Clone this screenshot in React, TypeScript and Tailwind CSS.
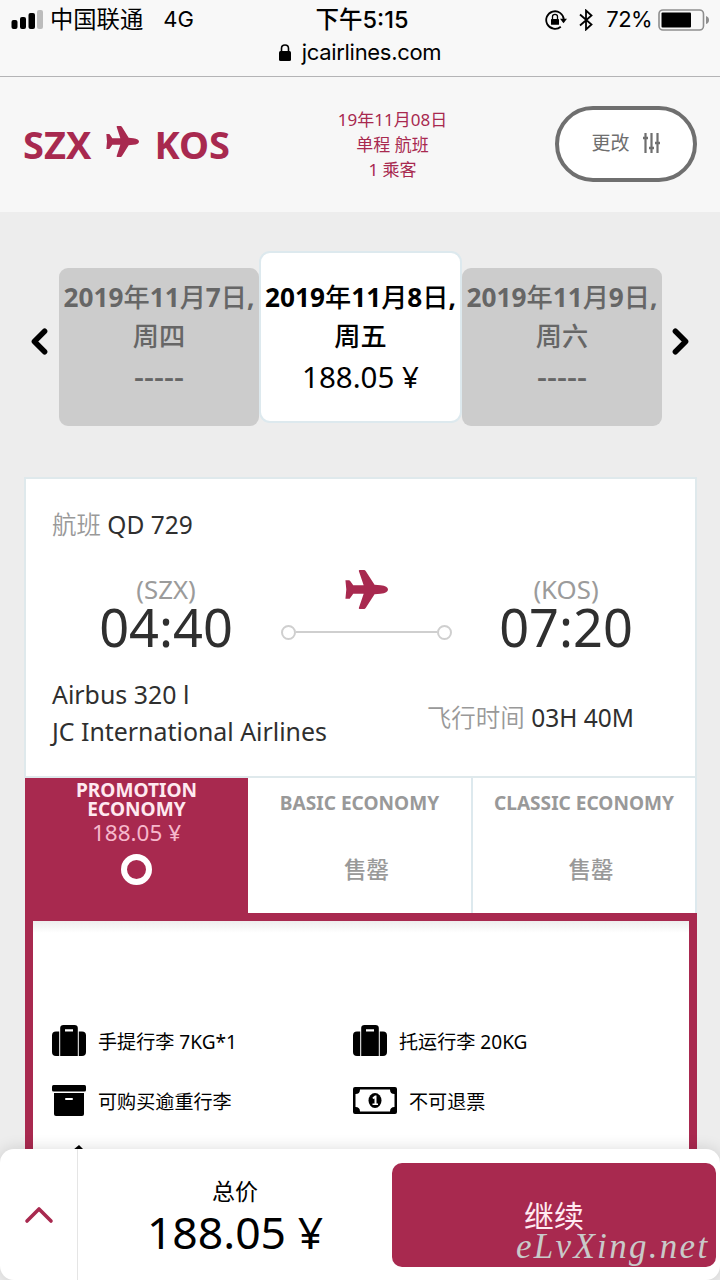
import type { ReactNode } from 'react';
import { ChevronLeft, ChevronRight, ChevronUp } from 'lucide-react';

const days = [
  { id: 'thu', date: ['2019', '年', '11', '月', '7', '日', ','], weekday: '周四', price: '-----', active: false },
  { id: 'fri', date: ['2019', '年', '11', '月', '8', '日', ','], weekday: '周五', price: '188.05 ¥', active: true },
  { id: 'sat', date: ['2019', '年', '11', '月', '9', '日', ','], weekday: '周六', price: '-----', active: false },
];

const soldOutFares = [
  { id: 'basic', name: 'BASIC ECONOMY', width: 'w-[225px]' },
  { id: 'classic', name: 'CLASSIC ECONOMY', width: 'w-[224px]' },
];

function Plane({ className }: { className: string }) {
  return (
    <svg viewBox="0 0 99 92" preserveAspectRatio="none" className={className} fill="currentColor">
      <path d="M1 24H9Q11 24 12 26L19 36H43L32 3Q31 0 34 0H44Q46 0 48 3L68 35L82 36Q99 38 99 46Q99 54 82 56L68 57L48 89Q46 92 44 92H34Q31 92 32 89L43 56H19L12 66Q11 68 9 68H1L3 46Z" />
    </svg>
  );
}

function Suitcase() {
  return (
    <svg viewBox="0 0 34 31" className="h-[31px] w-[34px] shrink-0">
      <path d="M7.200 6.500V31H4a4 4 0 0 1-4-4V10.500a4 4 0 0 1 4-4zM26.800 6.500V31H30a4 4 0 0 0 4-4V10.500a4 4 0 0 0-4-4z" />
      <path fillRule="evenodd" d="M8.200 31V3Q8.200 0 11.500 0h11q3.300 0 3.300 3v28zM13 4.300v2.200h8V4.300z" />
    </svg>
  );
}

function Archive() {
  return (
    <svg viewBox="0 0 34 31" className="h-[31px] w-[34px] shrink-0">
      <rect width="34" height="6.500" rx="1.500" />
      <path d="M2 8H32V29q0 2-2 2H4q-2 0-2-2z" />
      <rect x="13" y="13" width="8" height="2" rx="1" fill="#fff" />
    </svg>
  );
}

function Money() {
  return (
    <svg viewBox="0 0 44 27" className="h-[27px] w-[44px] shrink-0">
      <path fillRule="evenodd" d="M2 0h40q2 0 2 2v23q0 2-2 2H2q-2 0-2-2V2q0-2 2-2zM7 2.500q0 4.500-4.500 4.500v13q4.500 0 4.500 4.500h30q0-4.500 4.500-4.500V7q-4.500 0-4.500-4.500z" />
      <ellipse cx="22" cy="13.500" rx="6.500" ry="7.500" />
      <path d="M19.500 10.500L22 8.500H23.500V16.500H25V18H19.500V16.500H21.500V11.500L20 12Z" fill="#fff" />
    </svg>
  );
}

function StatusBar() {
  return (
    <div className="h-[77px] shrink-0 border-b border-[#b4b4b6] bg-[#f8f8f8] font-['Inter','Noto_Sans_CJK_SC',sans-serif] text-black">
      <div className="grid h-[39px] grid-cols-[1fr_auto_1fr] items-center pl-[11px] pr-[11px]">
        <div className="flex items-center">
          <svg viewBox="0 0 32 19" className="h-[19px] w-8">
            <rect x="0.500" y="10" width="6" height="9" rx="2" />
            <rect x="9" y="7" width="6" height="12" rx="2" />
            <rect x="17.500" y="3" width="6.500" height="16" rx="2" />
            <rect x="26" y="0" width="6" height="19" rx="2" fill="#bcbcbc" />
          </svg>
          <span className="ml-[7px] text-[23.300px] leading-[39px]">中国联通</span>
          <span className="ml-5 text-[22px] leading-[39px]">4G</span>
        </div>
        <span className="pl-1 text-[23.500px] font-medium leading-[39px]">下午5:15</span>
        <div className="flex items-center justify-end">
          <svg viewBox="0 0 22 20" className="h-5 w-[22px]" fill="none" stroke="#000" strokeWidth="1.800">
            <path d="M15.800 16.700A8.800 8.800 0 1 1 18.800 9.500" />
            <path d="M15 8.800h7l-3.500 4.400z" fill="#000" stroke="none" />
            <rect x="6" y="9" width="8" height="5.700" rx="0.500" fill="#000" stroke="none" />
            <path d="M7.500 9V6.500q0-2.200 2.500-2.200t2.500 2.200V9" strokeWidth="1.300" />
          </svg>
          <svg viewBox="0 0 14 22" className="ml-3 h-[22px] w-[14px]" fill="none" stroke="#000" strokeWidth="1.800">
            <path d="M1 5.500L12.500 15.500L7 20.500V1.500L12.500 6.500L1 16.500" />
          </svg>
          <span className="ml-[13px] text-[22px] leading-[39px] tracking-[-0.600px]">72%</span>
          <svg viewBox="0 0 51 22" className="ml-[6px] h-[22px] w-[51px]">
            <rect x="1" y="1" width="44.500" height="20" rx="4" fill="none" stroke="#8e8e8e" strokeWidth="1.600" />
            <rect x="3.500" y="3.500" width="29.500" height="15" rx="1" />
            <path d="M48 7q3 1 3 4t-3 4z" fill="#8e8e8e" />
          </svg>
        </div>
      </div>
      <div className="flex h-[26px] items-center justify-center gap-[11px]">
        <svg viewBox="0 0 12 17" className="h-[17px] w-3">
          <rect y="7" width="12" height="10" rx="1.500" />
          <path d="M2.500 8V4.500q0-3.500 3.500-3.500t3.500 3.500V8" fill="none" stroke="#000" strokeWidth="1.600" />
        </svg>
        <span className="text-[22px] leading-[26px] tracking-[-0.300px]">jcairlines.com</span>
      </div>
    </div>
  );
}

function TripHeader() {
  return (
    <header className="flex h-[135px] shrink-0 items-center justify-between bg-[#f7f7f7] pl-[23px] pr-[23px] text-[#a8294f]">
      <div className="mb-0.5 flex w-[207px] items-center text-[38px] font-bold leading-[50px]">
        <span>SZX</span>
        <Plane className="mb-[5px] ml-[15px] h-[31px] w-[33px] shrink-0" />
        <span className="ml-[15px]">KOS</span>
      </div>
      <div className="text-center text-[17px] leading-[25px]">
        <p>19年11月08日</p>
        <p>单程 航班</p>
        <p>1 乘客</p>
      </div>
      <button className="mb-0.5 flex h-[76px] w-[142px] items-center justify-center gap-[14px] rounded-full border-4 border-[#6f6f6f] bg-white text-[19px] text-[#6f6f6f]">
        更改
        <svg viewBox="0 0 17 20" className="mb-0.5 h-5 w-[17px]" fill="none" stroke="currentColor" strokeWidth="2.200">
          <path d="M2.500 0V20M8.500 0V20M14.500 0V20" />
          <path d="M0 5H5M6 15H11M12 10H17" strokeWidth="2.500" />
        </svg>
      </button>
    </header>
  );
}

function DayPicker() {
  return (
    <section className="flex h-[265px] shrink-0 items-start justify-center pt-10 text-center">
      <ChevronLeft className="mr-[-1px] mt-[69px] h-[41px] w-[41px] text-black" strokeWidth={3.2} />
      {days.map((day) => (
        <div
          key={day.id}
          className={
            day.active
              ? '-mt-px h-[172px] w-[203px] shrink-0 rounded-[11px] border-2 border-[#dde9ee] bg-white pt-[25px] text-black'
              : 'mt-4 h-[158px] w-[200px] shrink-0 rounded-[9px] bg-[#cccccc] pt-[10px] text-[#666]'
          }
        >
          <p className="whitespace-nowrap text-[26.200px] font-bold leading-[39px]">
            {day.date.map((part, i) => (
              <span key={i} className={i % 2 ? 'font-medium' : undefined}>
                {part}
              </span>
            ))}
          </p>
          <p className="text-[26.200px] font-medium leading-[39px]">{day.weekday}</p>
          <p className={day.active ? 'text-[29.500px] leading-[41px]' : 'text-[31px] font-medium leading-[41px]'}>
            {day.price}
          </p>
        </div>
      ))}
      <ChevronRight className="ml-[-2px] mt-[69px] h-[41px] w-[41px] text-black" strokeWidth={3.2} />
    </section>
  );
}

function Stop({ code, time }: { code: string; time: string }) {
  return (
    <div className="w-[140px] text-center">
      <p className="-mt-0.5 text-[25.800px] leading-[26px] text-[#9b9b9b]">{code}</p>
      <p className="mt-px text-[52.300px] leading-[48px]">{time}</p>
    </div>
  );
}

function FlightDetails() {
  return (
    <div className="-ml-px h-[301px] border-2 border-[#dfe9ec] bg-white pl-[26px] pr-[25px] pt-7 text-[24.500px] text-[#2f2f2f]">
      <p className="leading-9">
        <span className="font-[350] text-[#999]">航班</span> QD 729
      </p>
      <div className="mt-[35px] flex h-[74px] justify-between pl-[44px] pr-[34px]">
        <Stop code="(SZX)" time="04:40" />
        <div className="-mt-2 flex w-[171px] flex-col items-center">
          <Plane className="h-[39px] w-[43px] text-[#a8294f]" />
          <div className="mt-4 flex w-full items-center">
            <span className="h-[15px] w-[15px] rounded-full border-2 border-[#cfcfcf]" />
            <span className="-mt-0.5 h-0.5 flex-1 bg-[#cfcfcf]" />
            <span className="h-[15px] w-[15px] rounded-full border-2 border-[#cfcfcf]" />
          </div>
        </div>
        <Stop code="(KOS)" time="07:20" />
      </div>
      <div className="mt-6 flex items-center justify-between pr-[36px]">
        <div className="text-[24.900px] leading-[36.500px]">
          <p>Airbus 320 l</p>
          <p>JC International Airlines</p>
        </div>
        <p className="pt-[11px] leading-9">
          <span className="font-[350] text-[#999]">飞行时间</span> 03H 40M
        </p>
      </div>
    </div>
  );
}

function Fares() {
  return (
    <div className="flex h-[135px] text-center">
      <div className="flex flex-1 flex-col items-center bg-[#a8294f] pt-[3px] text-[#ffe9f0]">
        <p className="text-[19.100px] font-bold leading-[19px]">
          PROMOTION
          <br />
          ECONOMY
        </p>
        <p className="text-[22.500px] leading-[27px] text-[#f6b8cc]">188.05 ¥</p>
        <span className="mt-2 h-[31px] w-[31px] rounded-full border-[6px] border-white" />
      </div>
      {soldOutFares.map((fare) => (
        <div key={fare.id} className={`${fare.width} border-r-2 border-[#dde9ee] bg-white text-[#999]`}>
          <p className="pt-[13px] text-[19.100px] font-bold leading-6">{fare.name}</p>
          <p className="mt-[39px] pl-[14px] text-[22.500px] font-medium leading-8">售罄</p>
        </div>
      ))}
    </div>
  );
}

function Perk({ icon, label }: { icon: ReactNode; label: string }) {
  return (
    <div className="flex h-[60px] w-[301px] items-center gap-3 text-[19.100px] text-black">
      {icon}
      <span className="pt-[3px] leading-7">{label}</span>
    </div>
  );
}

function FarePerks() {
  return (
    <div className="h-[260px] border-8 border-[#a8294f] bg-white">
      <div className="h-3 bg-linear-to-b from-[#ededed] to-white" />
      <div className="mt-[77px] flex flex-wrap pl-[19px]">
        <Perk icon={<Suitcase />} label="手提行李 7KG*1" />
        <Perk icon={<Suitcase />} label="托运行李 20KG" />
        <Perk icon={<Archive />} label="可购买逾重行李" />
        <Perk icon={<Money />} label="不可退票" />
      </div>
      <svg viewBox="0 0 34 31" className="ml-5 mt-[15px] h-[31px] w-[34px]">
        <path d="M26 0L34 8L10 31H0V22Z" />
      </svg>
    </div>
  );
}

function TotalBar() {
  return (
    <footer className="absolute inset-x-0 bottom-0 flex h-[131px] rounded-[14px] bg-white text-black shadow-[0_0_16px_rgba(0,0,0,0.14)]">
      <div className="flex w-[78px] items-center justify-center border-r border-[#e5e5e5]">
        <ChevronUp className="h-[48px] w-[48px] text-[#a8294f]" strokeWidth={1.8} />
      </div>
      <div className="flex-1 pt-6 text-center">
        <p className="text-[23px] leading-9">总价</p>
        <p className="text-[44.500px] leading-[46px]">188.05 ¥</p>
      </div>
      <button className="relative mr-1 mt-[14px] h-[104px] w-[324px] rounded-[10px] bg-[#a8294f] text-[30px] text-[#ffeaf2]">
        继续
        <span className="absolute left-[124px] top-[64px] whitespace-nowrap font-['Liberation_Serif',serif] text-[35px] italic leading-10 tracking-[2.300px] text-[#c9c9c9]">
          eLvXing.net
        </span>
      </button>
    </footer>
  );
}

export default function App() {
  return (
    <div className="relative flex h-[1280px] w-[720px] flex-col overflow-hidden bg-[#ededed] font-['Noto_Sans','Noto_Sans_CJK_SC',sans-serif]">
      <StatusBar />
      <TripHeader />
      <DayPicker />
      <main className="ml-[25px] mr-[23px] shrink-0">
        <FlightDetails />
        <Fares />
        <FarePerks />
      </main>
      <TotalBar />
    </div>
  );
}
